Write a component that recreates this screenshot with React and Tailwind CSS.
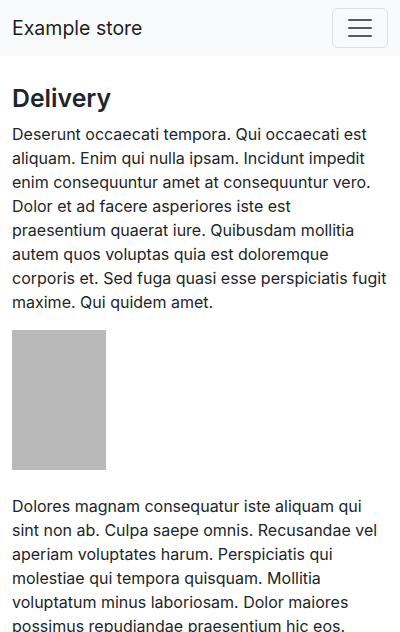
export default function App() {
  return (
    <div className="min-h-[632px] bg-white text-[#212529]" style={{ fontFamily: "Inter, 'Noto Sans', sans-serif" }}>
      <nav className="h-14 bg-[#f8f9fa] flex items-center justify-between px-3">
        <span className="text-[19.5px] leading-[30px] text-black/90">Example store</span>
        <button className="w-14 h-10 border border-black/10 rounded-md flex items-center justify-center">
          <svg width="30" height="30" viewBox="0 0 30 30">
            <path d="M4 7h22M4 15h22M4 23h22" stroke="rgba(33,37,41,0.75)" strokeWidth="2" strokeLinecap="round" />
          </svg>
        </button>
      </nav>
      <main className="px-3 pt-[28px]">
        <h2 className="text-[24.8px] leading-[1.2] font-semibold mb-2">Delivery</h2>
        <p className="text-base leading-6 mb-4">
          Deserunt occaecati tempora. Qui occaecati est aliquam. Enim qui nulla ipsam. Incidunt impedit enim consequuntur amet at consequuntur vero. Dolor et ad facere asperiores iste est praesentium quaerat iure. Quibusdam mollitia autem quos voluptas quia est doloremque corporis et. Sed fuga quasi esse perspiciatis fugit maxime. Qui quidem amet.
        </p>
        <div className="w-[94px] h-[140px] bg-[#b9b9b9] mb-6"></div>
        <p className="text-base leading-6 mb-4">
          Dolores magnam consequatur iste aliquam qui sint non ab. Culpa saepe omnis. Recusandae vel aperiam voluptates harum. Perspiciatis qui molestiae qui tempora quisquam. Mollitia voluptatum minus laboriosam. Dolor maiores possimus repudiandae praesentium hic eos.
        </p>
      </main>
    </div>
  );
}
